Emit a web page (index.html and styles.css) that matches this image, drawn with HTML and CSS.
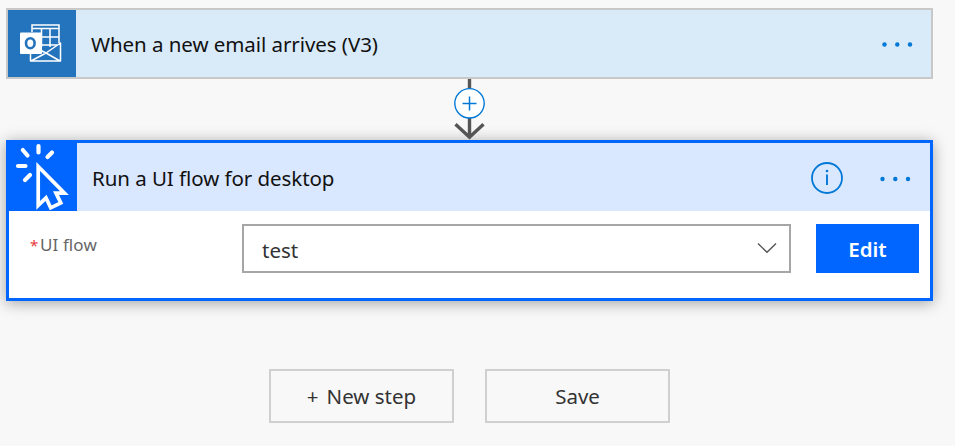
FILE: index.html
```html
<!DOCTYPE html>
<html lang="en">
<head>
<meta charset="utf-8">
<title>Flow designer</title>
<link rel="stylesheet" href="styles.css">
</head>
<body>
<main class="flow">
  <section class="card trigger">
    <div class="icon">
      <svg width="68" height="67" viewBox="8 10 68 67" fill="none" stroke="#fff">
        <path d="M32 32V25H59V43M32 28.500H59M41.500 29V47M50 29V47M34 37H59M34 45H57" stroke-width="1.500"/>
        <path d="M30.500 51V61H60.500V43L46 53L40 50M46 53L60 61M46 53L31 61" stroke-width="1.500" stroke-linejoin="round"/>
        <rect x="20" y="32.500" width="22" height="21.500" rx="1" fill="#fff" stroke="none"/>
        <ellipse cx="30.300" cy="43.200" rx="4.300" ry="5" stroke="#2474bd" stroke-width="2.600"/>
      </svg>
    </div>
    <h2 class="title title-trigger">When a new email arrives (V3)</h2>
    <svg class="dots" width="32" height="6" fill="#0078d7"><circle cx="2.500" cy="3.500" r="2.200"/><circle cx="15.300" cy="3.500" r="2.200"/><circle cx="28" cy="3.500" r="2.200"/></svg>
  </section>
  <div class="connector">
    <svg width="41" height="61" viewBox="450 79 41 61" fill="none">
      <path d="M470.500 79V138M456.500 124.300L470.500 137.300L484.500 124.300" stroke="#555" stroke-width="3.400"/>
      <circle cx="470.500" cy="103.300" r="14.700" fill="#fff" stroke="#0078d7" stroke-width="1.400"/>
      <path d="M463.500 103.500H477.500M470.500 96.500V110.500" stroke="#0078d7" stroke-width="1.500"/>
    </svg>
  </div>
  <section class="card action">
    <header class="head">
      <div class="icon">
        <svg width="68" height="68" viewBox="9 143 68 68" fill="none" stroke="#fff">
          <path d="M38.500 146V152.500M22.800 150L27.500 155.500M52 152.500L47.500 157M18 166H25.500M30 175L25 180" stroke-width="4.200" stroke-linecap="round"/>
          <path d="M38.200 166.500V205.300L46 197.800L50.700 207.800L60.800 202.800L56 193.200H64.500Z" stroke-width="3.700"/>
        </svg>
      </div>
      <h2 class="title title-action">Run a UI flow for desktop</h2>
      <svg class="info" width="34" height="34" viewBox="0 0 34 34" fill="none" stroke="#0078d7"><circle cx="17" cy="17" r="15" stroke-width="1.800"/><path d="M17 13.500V24" stroke-width="1.900"/><circle cx="17" cy="10" r="1.300" fill="#0078d7" stroke="none"/></svg>
      <svg class="dots" width="32" height="6" fill="#0078d7"><circle cx="2.500" cy="3" r="2.200"/><circle cx="15.300" cy="3" r="2.200"/><circle cx="28" cy="3" r="2.200"/></svg>
    </header>
    <div class="body">
      <label class="label"><span class="req">*</span><span class="label-text">UI flow</span></label>
      <div class="select"><span class="value">test</span>
        <svg width="20" height="12" viewBox="0 0 20 12" fill="none" stroke="#555" stroke-width="1.400"><path d="M1 1.500L10 10.300L19 1.500"/></svg>
      </div>
      <button class="edit">Edit</button>
    </div>
  </section>
  <footer class="actions">
    <button class="btn new"><span class="plus">+</span><span>New step</span></button>
    <button class="btn">Save</button>
  </footer>
</main>
</body>
</html>
```
FILE: styles.css
```css
* { box-sizing: border-box; }
body {
  margin: 0;
  height: 446px;
  overflow: hidden;
  background: #f8f8f8;
  color: #111;
  font-family: "Noto Sans", "Open Sans", sans-serif;
}
.flow { width: 927px; margin-left: 6px; padding-top: 8px; }
svg { display: block; flex: none; }
.card { display: flex; }
.trigger {
  height: 71px;
  align-items: center;
  background: #d9eaf8;
  border: 2px solid #c8c8c8;
  padding-right: 17px;
}
.trigger .icon { background: #2474bd; width: 68px; height: 67px; }
.title {
  flex: 1;
  margin: 0 0 0 15px;
  font-size: 20.5px;
  font-weight: 400;
  line-height: 28px;
  white-space: nowrap;
}
.title-trigger { letter-spacing: -0.06px; padding-top: 1px; }
.title-action { letter-spacing: -0.06px; padding-top: 1px; }
.connector {
  position: relative;
  z-index: 1;
  display: flex;
  justify-content: center;
  height: 61px;
}
.action {
  position: relative;
  flex-direction: column;
  height: 161px;
  background: #fff;
  border: 3px solid #06f;
  box-shadow: 0 2px 14px rgba(0, 0, 0, .35);
}
.head { display: flex; align-items: center; height: 68px; background: #d9e7ff; padding-right: 18px; }
.head .icon { background: #06f; }
.info { margin: 2px 36px 0 0; }
.head .dots { position: relative; top: 2px; }
.body { display: flex; padding: 13px 11px 0 21px; }
.label { display: flex; width: 212px; padding-top: 8px; font-size: 17px; line-height: 26px; color: #666; }
.label-text { letter-spacing: 0.1px; }
.req { color: #e8393c; width: 10px; font-size: 15px; }
.select {
  display: flex;
  align-items: center;
  justify-content: space-between;
  width: 549px;
  height: 49px;
  padding: 3px 12px 0 18px;
  border: 2px solid #a6a6a6;
  font-size: 20.5px;
  color: #333;
}
.select svg { margin-top: -4px; }
button { font-family: inherit; font-size: 20.5px; padding: 0; }
.edit { width: 103px; height: 49px; margin-left: auto; border: 0; background: #06f; color: #fff; font-weight: 600; }
.actions { display: flex; justify-content: center; gap: 31px; margin-top: 68px; }
.btn { width: 185px; height: 54px; border: 2px solid #d0d0d0; background: #f8f8f8; color: #333; }
.new { display: flex; align-items: center; justify-content: center; gap: 8px; }
```
